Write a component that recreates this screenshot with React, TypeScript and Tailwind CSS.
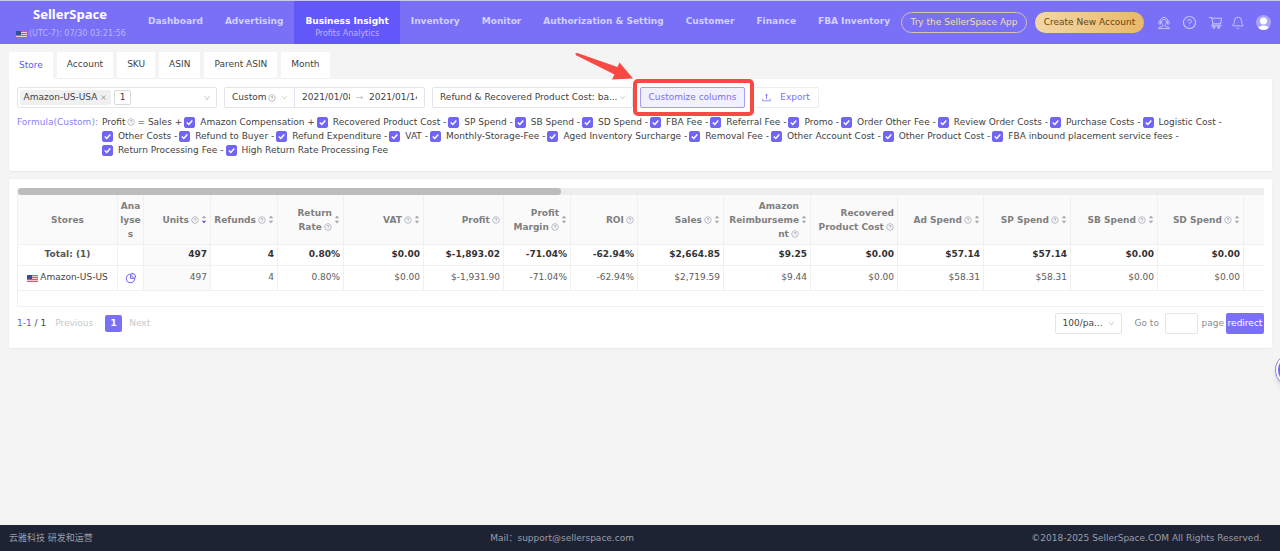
import React, { useState } from 'react';
import {
  AiFillCaretDown, AiFillCaretUp, AiOutlineClose, AiOutlineDown,
  AiOutlinePieChart, AiOutlineQuestionCircle, AiOutlineShoppingCart, AiOutlineUpload,
} from 'react-icons/ai';
import { Bell } from 'lucide-react';

const navItems = [
  { label: 'Dashboard' },
  { label: 'Advertising' },
  { label: 'Business Insight', sub: 'Profits Analytics' },
  { label: 'Inventory' },
  { label: 'Monitor' },
  { label: 'Authorization & Setting' },
  { label: 'Customer' },
  { label: 'Finance' },
  { label: 'FBA Inventory' },
];

const tabs = ['Store', 'Account', 'SKU', 'ASIN', 'Parent ASIN', 'Month'];

const formulaItems = [
  'Amazon Compensation +', 'Recovered Product Cost -', 'SP Spend -', 'SB Spend -', 'SD Spend -',
  'FBA Fee -', 'Referral Fee -', 'Promo -', 'Order Other Fee -', 'Review Order Costs -',
  'Purchase Costs -', 'Logistic Cost -', 'Other Costs -', 'Refund to Buyer -', 'Refund Expenditure -',
  'VAT -', 'Monthly-Storage-Fee -', 'Aged Inventory Surcharge -', 'Removal Fee -', 'Other Account Cost -',
  'Other Product Cost -', 'FBA inbound placement service fees -', 'Return Processing Fee -',
  'High Return Rate Processing Fee',
];

interface Column {
  title: string;
  width: string;
  total: string;
  value: string;
  sortable?: boolean;
  sorted?: boolean;
}

const columns: Column[] = [
  { title: 'Units', width: 'w-[67px]', total: '497', value: '497', sortable: true, sorted: true },
  { title: 'Refunds', width: 'w-[67px]', total: '4', value: '4', sortable: true },
  { title: 'Return Rate', width: 'w-[66px]', total: '0.80%', value: '0.80%', sortable: true },
  { title: 'VAT', width: 'w-[80px]', total: '$0.00', value: '$0.00', sortable: true },
  { title: 'Profit', width: 'w-[80px]', total: '$-1,893.02', value: '$-1,931.90' },
  { title: 'Profit Margin', width: 'w-[67px]', total: '-71.04%', value: '-71.04%', sortable: true },
  { title: 'ROI', width: 'w-[67px]', total: '-62.94%', value: '-62.94%' },
  { title: 'Sales', width: 'w-[86px]', total: '$2,664.85', value: '$2,719.59', sortable: true },
  { title: 'Amazon Reimbursement', width: 'w-[87px]', total: '$9.25', value: '$9.44', sortable: true },
  { title: 'Recovered Product Cost', width: 'w-[87px]', total: '$0.00', value: '$0.00' },
  { title: 'Ad Spend', width: 'w-[86px]', total: '$57.14', value: '$58.31', sortable: true },
  { title: 'SP Spend', width: 'w-[87px]', total: '$57.14', value: '$58.31', sortable: true },
  { title: 'SB Spend', width: 'w-[87px]', total: '$0.00', value: '$0.00', sortable: true },
  { title: 'SD Spend', width: 'w-[86px]', total: '$0.00', value: '$0.00', sortable: true },
];

function UsFlag() {
  return (
    <svg viewBox="0 0 11 7" className="h-[7px] w-[11px] shrink-0" aria-hidden="true">
      <rect width="11" height="7" fill="#f0c9d2" />
      {[0, 2, 4, 6].map((y) => (
        <rect key={y} y={y} width="11" height="1" fill="#d9596b" />
      ))}
      <rect width="5" height="4" fill="#3f4c8c" />
    </svg>
  );
}

function SupportIcon() {
  return (
    <svg viewBox="0 0 24 24" className="size-[14px]" fill="none" stroke="currentColor" strokeWidth="1.7" strokeLinecap="round" strokeLinejoin="round" aria-hidden="true">
      <path d="M5 9.500a7 7 0 0 1 14 0" />
      <path d="M5.500 9H4.500A1.500 1.500 0 0 0 3 10.500v2A1.500 1.500 0 0 0 4.500 14h1zM18.500 9h1a1.500 1.500 0 0 1 1.500 1.500v2a1.500 1.500 0 0 1-1.500 1.500h-1z" />
      <path d="M8 10a4 4.500 0 0 1 8 0c0 2.500-.8 4.300-2.200 5.400v1.400c0 .6.400 1 1 1.200l5 1.200c1 .3 1.700 1 1.700 2.300h-19c0-1.300.7-2 1.700-2.300l5-1.200c.6-.2 1-.6 1-1.200v-1.400C8.800 14.300 8 12.500 8 10z" />
    </svg>
  );
}

function Avatar() {
  return (
    <svg viewBox="0 0 30 30" className="size-[15px]" aria-hidden="true">
      <clipPath id="avatar-clip">
        <circle cx="15" cy="15" r="15" />
      </clipPath>
      <g clipPath="url(#avatar-clip)">
        <rect width="30" height="30" fill="#aaa5f8" />
        <circle cx="15" cy="12" r="7" fill="#fff" />
        <ellipse cx="15" cy="27" rx="11" ry="6" fill="#fff" />
      </g>
    </svg>
  );
}

function Header() {
  return (
    <header className="flex h-11 items-stretch border-t border-[#c9c6f5] bg-[#7970f7] text-white">
      <div className="flex w-[137px] shrink-0 flex-col pl-4 pt-[5px]">
        <span className="w-[108px] text-center font-['Noto_Sans',sans-serif] text-[13px] font-bold leading-4">SellerSpace</span>
        <span className="mt-[6px] flex items-center gap-[2px] whitespace-nowrap text-[8px] leading-3 text-[#b9b4fa]">
          <UsFlag />
          (UTC-7): 07/30 03:21:56
        </span>
      </div>
      <nav className="flex shrink-0">
        {navItems.map((item) => (
          <a
            key={item.label}
            href="#"
            className={`flex flex-col items-center whitespace-nowrap px-[11px] pt-[13px] text-[9px] font-bold leading-[14px] ${item.sub ? 'bg-[#6257f9] text-white' : 'text-[#d3d0fb]'}`}
          >
            {item.label}
            {item.sub && <span className="text-[8px] font-normal leading-3 text-[#b9b4fa]">{item.sub}</span>}
          </a>
        ))}
      </nav>
      <div className="ml-auto flex items-center whitespace-nowrap pr-[11px] text-[9px]">
        <button className="h-[21px] w-[126px] rounded-full border border-[#d8bfb0] text-[#f6dcae]">Try the SellerSpace App</button>
        <button className="ml-2 h-[21px] w-[109px] rounded-full bg-linear-to-r from-[#f3d7a5] to-[#e8b968] text-[#6a4516]">Create New Account</button>
        <div className="ml-[13px] flex items-center gap-[11px] text-[#c6c2fb]">
          <SupportIcon />
          <AiOutlineQuestionCircle className="size-[15px]" />
          <AiOutlineShoppingCart className="size-[15px]" />
          <Bell className="-ml-[3px] size-[14px]" strokeWidth={1.7} />
          <Avatar />
        </div>
      </div>
    </header>
  );
}

function Filters() {
  return (
    <div className="flex items-center gap-[7px]">
      <div className="flex h-[21px] w-[200px] items-center gap-[3px] rounded-xs border border-[#e4e4ea] px-[2px]">
        <span className="flex h-[15px] w-[91px] items-center justify-center gap-[3px] rounded-xs bg-[#f0f0f0] whitespace-nowrap">
          Amazon-US-USA
          <button aria-label="Remove Amazon-US-USA">
            <AiOutlineClose className="size-[7px] text-[#8c8c8c]" />
          </button>
        </span>
        <span className="flex h-[15px] w-[17px] items-center justify-center rounded-xs border border-[#d9d9d9]">1</span>
        <AiOutlineDown className="ml-auto mr-[3px] size-[8px] text-[#bfbfbf]" />
      </div>

      <div className="flex h-[21px] w-[201px] items-center rounded-xs border border-[#e4e4ea]">
        <div className="relative flex h-full w-[70px] items-center border-r border-[#e4e4ea]">
          <select aria-label="Date range" className="h-full w-full appearance-none pl-[7px] outline-none">
            <option>Custom</option>
          </select>
          <AiOutlineQuestionCircle className="pointer-events-none absolute right-[18px] size-[8px] text-[#8f90a6]" />
          <AiOutlineDown className="pointer-events-none absolute right-[6px] size-[7px] text-[#bfbfbf]" />
        </div>
        <input aria-label="Start date" defaultValue="2021/01/08" className="ml-[7px] w-[48px] outline-none" />
        <span className="w-[19px] text-center text-[#bfbfbf]">→</span>
        <input aria-label="End date" defaultValue="2021/01/14" className="w-[48px] outline-none" />
      </div>

      <div className="relative flex h-[21px] w-[201px] items-center">
        <select aria-label="Cost basis" className="h-full w-full appearance-none rounded-xs border border-[#e4e4ea] pl-[7px] outline-none">
          <option>Refund &amp; Recovered Product Cost: ba...</option>
        </select>
        <AiOutlineDown className="pointer-events-none absolute right-[7px] size-[7px] text-[#bfbfbf]" />
      </div>

      <div className="relative">
        <button className="block h-[21px] w-[105px] rounded-xs border border-[#a39df8] bg-[#f1f0fe] text-[#7a70f5]">Customize columns</button>
        <span className="pointer-events-none absolute -inset-y-[8px] -left-[7px] -right-[9px] z-10 rounded-[5px] border-4 border-[#f74a45]" />
        <svg viewBox="0 0 58 27" className="pointer-events-none absolute -left-[65px] -top-[34px] z-10 h-[27px] w-[58px]" aria-hidden="true">
          <path d="M.5 .5Q1-.2 3 .3L42.500 14 44.500 9.500 58 25.500 37 26.500 39.500 21.500 1.500 2.500Q0 1.500 .5.500z" fill="#f74a45" />
        </svg>
      </div>

      <button className="flex h-[21px] w-[67px] items-center justify-center gap-2 rounded-xs border border-[#ececf2] text-[#7a70f5]">
        <AiOutlineUpload className="size-[11px]" />
        Export
      </button>
    </div>
  );
}

function Formula() {
  return (
    <div className="mt-[7px] flex leading-[14px]">
      <span className="w-[85px] shrink-0 whitespace-nowrap text-[#8b82f7]">Formula(Custom):</span>
      <div className="flex flex-1 flex-wrap gap-x-[2px]">
        <span className="flex items-center gap-[2px] whitespace-nowrap">
          Profit
          <AiOutlineQuestionCircle className="size-[8px] text-[#8f90a6]" />
          = Sales +
        </span>
        {formulaItems.map((item) => (
          <label key={item} className="flex items-center gap-[5px] whitespace-nowrap">
            <span className="relative flex size-[11px]">
              <input type="checkbox" defaultChecked className="peer size-[11px] appearance-none rounded-xs border border-[#c8c8d2] checked:border-[#7065f5] checked:bg-[#7065f5]" />
              <svg viewBox="0 0 11 11" className="pointer-events-none absolute inset-0 hidden peer-checked:block" fill="none" stroke="#fff" strokeWidth="1.500" aria-hidden="true">
                <path d="M2.800 5.500 4.800 7.500 8.300 3.600" />
              </svg>
            </span>
            {item}
          </label>
        ))}
      </div>
    </div>
  );
}

function HeaderCell({ column }: { column: Column }) {
  return (
    <div className="flex items-center justify-end gap-[2px]">
      <span className="min-w-0 wrap-anywhere">
        {column.title}{' '}
        <AiOutlineQuestionCircle className="-ml-px inline size-[8px] align-[-1px] text-[#8f90a6]" />
      </span>
      {column.sortable && (
        <button aria-label={`Sort by ${column.title}`} className="flex shrink-0 flex-col text-[#a6a6ac]">
          <AiFillCaretUp className="-mb-px size-[6px]" />
          <AiFillCaretDown className={`size-[6px] ${column.sorted ? 'text-[#6257f9]' : ''}`} />
        </button>
      )}
    </div>
  );
}

function ProfitTable() {
  const cell = 'border-b border-r border-[#f0f0f0]';

  return (
    <div className="overflow-hidden border-b border-l border-[#f0f0f0]">
      <div className="h-[7px] bg-[#ededed]">
        <div className="h-full w-[43.6%] rounded-full bg-[#bcbcbc]" />
      </div>
      <table className="w-full table-fixed border-separate border-spacing-0">
        <colgroup>
          <col className="w-[100px]" />
          <col className="w-[26px]" />
          {columns.map((column) => (
            <col key={column.title} className={column.width} />
          ))}
          <col />
        </colgroup>
        <thead className="bg-[#fafafa] leading-[14px] text-[#7f7f7f]">
          <tr className="h-[50px]">
            <th className={`${cell} px-[3px]`}>Stores</th>
            <th className={`${cell} break-all px-[2px]`}>Analyses</th>
            {columns.map((column) => (
              <th key={column.title} className={`${cell} px-[3px] text-right`}>
                <HeaderCell column={column} />
              </th>
            ))}
            <th className="border-b border-[#f0f0f0]" />
          </tr>
        </thead>
        <tbody>
          <tr className="h-[21px] font-bold text-[#333]">
            <td className={`${cell} px-[3px] text-center text-[#555]`}>Total: (1)</td>
            <td className={cell} />
            {columns.map((column) => (
              <td key={column.title} className={`${cell} px-[3px] text-right ${column.sorted ? 'bg-[#fafafa]' : ''}`}>{column.total}</td>
            ))}
            <td className="border-b border-[#f0f0f0]" />
          </tr>
          <tr className="h-[25px] text-[#5c5c5c]">
            <td className={`${cell} px-[3px] text-[#444]`}>
              <span className="flex items-center justify-center gap-[2px] whitespace-nowrap">
                <UsFlag />
                Amazon-US-US
              </span>
            </td>
            <td className={cell}>
              <button aria-label="Analyses" className="mx-auto block">
                <AiOutlinePieChart className="size-[12px] text-[#6257f9]" />
              </button>
            </td>
            {columns.map((column) => (
              <td key={column.title} className={`${cell} px-[3px] text-right ${column.sorted ? 'bg-[#fafafa]' : ''}`}>{column.value}</td>
            ))}
            <td className="border-b border-[#f0f0f0]" />
          </tr>
        </tbody>
      </table>
      <div className="h-[15px]" />
    </div>
  );
}

function Pagination() {
  return (
    <div className="mt-[6px] flex h-[21px] items-center whitespace-nowrap text-[#8c8c8c]">
      <span className="text-[#444]"><span className="text-[#6257f9]">1-1</span> / 1</span>
      <button disabled className="ml-[9px] text-[#c8c8c8]">Previous</button>
      <button className="ml-3 size-[17px] rounded-xs bg-[#7970f7] font-bold text-white">1</button>
      <button disabled className="ml-[7px] text-[#c8c8c8]">Next</button>
      <div className="relative ml-auto flex h-[21px] w-[67px] items-center">
        <select aria-label="Page size" className="h-full w-full appearance-none rounded-xs border border-[#e4e4ea] pl-[7px] text-[#444] outline-none">
          <option>100/pa...</option>
        </select>
        <AiOutlineDown className="pointer-events-none absolute right-[7px] size-[7px] text-[#bfbfbf]" />
      </div>
      <label htmlFor="page" className="ml-[13px] w-[30px]">Go to</label>
      <input id="page" className="h-[21px] w-[33px] rounded-xs border border-[#e4e4ea] px-1 outline-none" />
      <span className="ml-1">page</span>
      <button className="ml-[2px] h-[21px] w-[38px] rounded-xs bg-[#7970f7] text-white">redirect</button>
    </div>
  );
}

export default function App() {
  const [activeTab, setActiveTab] = useState('Store');

  return (
    <div className="relative flex min-h-screen flex-col overflow-hidden bg-[#f4f4f4] font-['DejaVu_Sans','Noto_Sans_CJK_SC',sans-serif] text-[9px] text-[#3f3f3f]">
      <Header />

      <main className="flex-1 pl-[9px] pr-2 pt-2">
        <div className="flex gap-1">
          {tabs.map((tab) => (
            <button
              key={tab}
              onClick={() => setActiveTab(tab)}
              className={`h-[27px] rounded-t-xs bg-white px-[10px] ${tab === activeTab ? 'text-[#6257f9]' : 'border-b border-[#f0f0f0]'}`}
            >
              {tab}
            </button>
          ))}
        </div>
        <section className="rounded-b-xs bg-white px-2 pb-[14px] pt-2 shadow-xs">
          <Filters />
          <Formula />
        </section>

        <section className="mt-2 rounded-xs bg-white px-2 pb-[14px] pt-[9px] shadow-xs">
          <ProfitTable />
          <Pagination />
        </section>
      </main>

      <footer className="flex h-[26px] items-center justify-between bg-[#1e2334] pl-[9px] pr-[18px] pt-[2px] text-[#9b9da5]">
        <span>云雅科技 研发和运营</span>
        <span>Mail：support@sellerspace.com</span>
        <span>©2018-2025 SellerSpace.COM All Rights Reserved.</span>
      </footer>

      {/* Floating helper, tucked into the right edge */}
      <button aria-label="Open assistant" className="absolute -right-[29px] top-[353px] size-[34px] rounded-full border border-[#8b82f7] bg-white p-[2px] shadow-md">
        <span className="block size-full rounded-full bg-[#7065f5]" />
      </button>
    </div>
  );
}
